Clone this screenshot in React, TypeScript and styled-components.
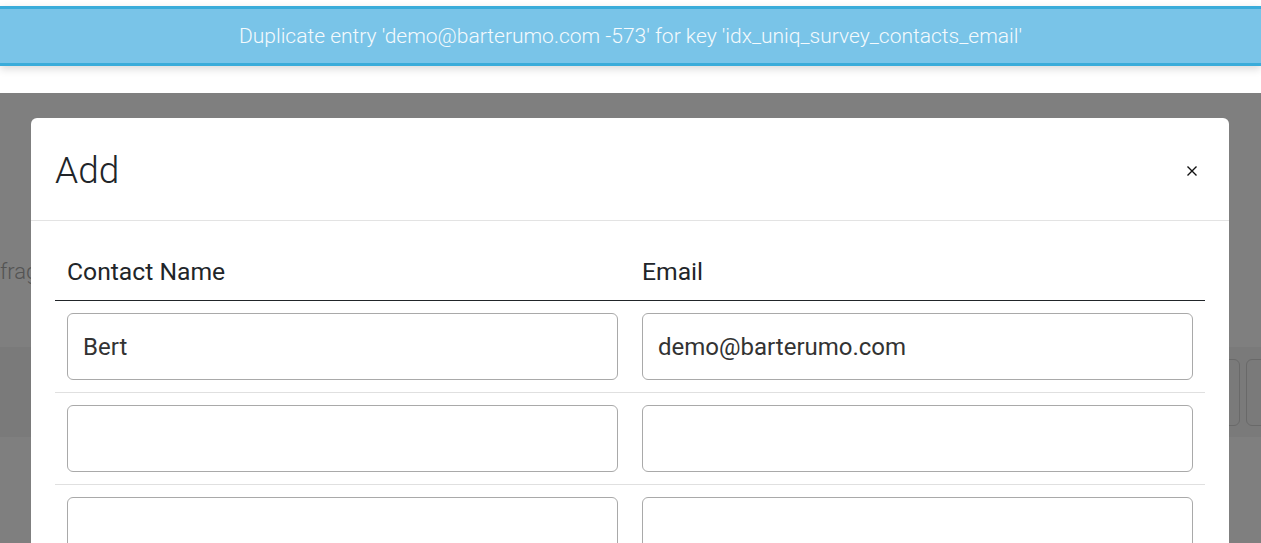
import styled, { createGlobalStyle } from "styled-components";

const GlobalStyle = createGlobalStyle`
  html, body {
    margin: 0;
    padding: 0;
    overflow: hidden;
    background: #ffffff;
    font-family: Roboto, "Liberation Sans", sans-serif;
  }
  * {
    box-sizing: border-box;
  }
`;

const rows = [
  { name: "Bert", email: "demo@barterumo.com" },
  { name: "", email: "" },
  { name: "", email: "" },
  { name: "", email: "" },
];

export default function App() {
  return (
    <>
      <GlobalStyle />
      <Page>
        <Alert>
          Duplicate entry 'demo@barterumo.com -573' for key
          'idx_uniq_survey_contacts_email'
        </Alert>
        <Content>
          <Fragment>frag</Fragment>
          <Toolbar>
            <ToolButton />
            <ToolButton />
          </Toolbar>
        </Content>
      </Page>

      <Backdrop>
        <Modal>
          <ModalHeader>
            <ModalTitle>Add</ModalTitle>
            <CloseButton aria-label="Close">
              <svg width="10" height="10" viewBox="0 0 10 10">
                <path
                  d="M0.5 0.5 L9.5 9.5 M9.5 0.5 L0.5 9.5"
                  stroke="#111"
                  strokeWidth="1.4"
                  fill="none"
                />
              </svg>
            </CloseButton>
          </ModalHeader>
          <ModalBody>
            <Table>
              <thead>
                <tr>
                  <Th>Contact Name</Th>
                  <Th>Email</Th>
                </tr>
              </thead>
              <tbody>
                {rows.map((row, i) => (
                  <tr key={i}>
                    <Td>
                      <Input defaultValue={row.name} />
                    </Td>
                    <Td>
                      <Input defaultValue={row.email} />
                    </Td>
                  </tr>
                ))}
              </tbody>
            </Table>
          </ModalBody>
        </Modal>
      </Backdrop>
    </>
  );
}

const Page = styled.div`
  padding-top: 6px;
  min-height: 543px;
`;

const Alert = styled.div`
  position: relative;
  z-index: 2;
  height: 60px;
  display: flex;
  align-items: center;
  justify-content: center;
  background: #79c4e8;
  border-top: 3px solid #3aacda;
  border-bottom: 3px solid #3aacda;
  box-shadow: 0px 3px 8px rgba(0, 0, 0, 0.15);
  color: #f4fafd;
  font-size: 21px;
  font-weight: 300;
`;

const Content = styled.div`
  margin-top: 27px;
  padding-top: 162px;
`;

const Fragment = styled.p`
  margin: 0;
  font-size: 22px;
  line-height: 33px;
  font-weight: 300;
  color: #a8a8a8;
`;

const Toolbar = styled.div`
  margin-top: 59px;
  margin-right: -45px;
  height: 90px;
  display: flex;
  align-items: center;
  justify-content: flex-end;
  gap: 6px;
  background: #f4f4f4;
`;

const ToolButton = styled.div`
  width: 60px;
  height: 67px;
  border: 1px solid #d2d2d2;
  border-radius: 6px;
  background: #f4f4f4;
`;

const Backdrop = styled.div`
  position: fixed;
  z-index: 1;
  top: 93px;
  left: 0;
  right: 0;
  bottom: 0;
  overflow: hidden;
  background: rgba(0, 0, 0, 0.5);
  padding: 25px 0 0 31px;
`;

const Modal = styled.div`
  width: 1198px;
  background: #ffffff;
  border-radius: 6px;
`;

const ModalHeader = styled.div`
  display: flex;
  align-items: center;
  justify-content: space-between;
  padding: 24px;
  border-bottom: 1px solid #e3e3e3;
`;

const ModalTitle = styled.h5`
  margin: 2px 0 -2px;
  font-size: 37px;
  line-height: 54px;
  font-weight: 300;
  color: #212529;
`;

const CloseButton = styled.button`
  width: 26px;
  height: 26px;
  margin-top: 4px;
  padding: 0;
  display: flex;
  align-items: center;
  justify-content: center;
  border: none;
  background: transparent;
  cursor: pointer;
`;

const ModalBody = styled.div`
  padding: 22px 24px 24px;
`;

const Table = styled.table`
  width: 100%;
  border-collapse: collapse;
  table-layout: fixed;
`;

const Th = styled.th`
  padding: 12px;
  text-align: left;
  font-size: 24.7px;
  line-height: 33px;
  font-weight: 400;
  color: #212529;
  border-bottom: 1px solid #212529;
`;

const Td = styled.td`
  padding: 12px;
  border-bottom: 1px solid #e0e0e0;
`;

const Input = styled.input`
  display: block;
  width: 100%;
  height: 67px;
  padding: 0 15px;
  border: 1px solid #a9a9a9;
  border-radius: 6px;
  font-family: Roboto, "Liberation Sans", sans-serif;
  font-size: 24px;
  color: #333333;
  background: #ffffff;
  outline: none;
`;
